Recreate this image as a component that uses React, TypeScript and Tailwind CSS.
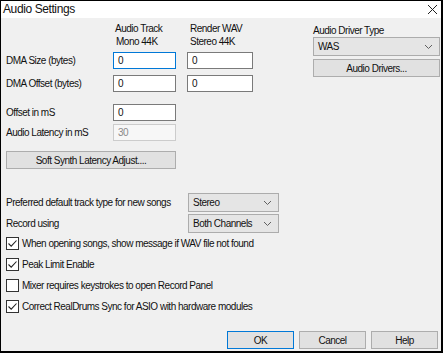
import React from "react";

const font = { fontFamily: "'Liberation Sans', Arial, sans-serif" };

function Chevron() {
  return (
    <svg width="9" height="6" viewBox="0 0 9 6" className="shrink-0">
      <path d="M1 1 L4.5 4.5 L8 1" fill="none" stroke="#606060" strokeWidth="1" />
    </svg>
  );
}

function Combo({ value, w }: { value: string; w: string }) {
  return (
    <div className={`${w} h-[19px] bg-[#e5e5e5] border border-[#acacac] flex items-center justify-between pl-[4px] pr-[6px]`}>
      <span>{value}</span>
      <Chevron />
    </div>
  );
}

function Btn({ label, cls }: { label: string; cls: string }) {
  return (
    <div className={`h-[18px] bg-[#e1e1e1] border border-[#adadad] flex items-center justify-center ${cls}`}>{label}</div>
  );
}

function Input({ value, cls = "", focus = false, disabled = false }: { value: string; cls?: string; focus?: boolean; disabled?: boolean }) {
  return (
    <div
      className={`h-[17px] flex items-center pl-[4px] ${
        disabled ? "bg-[#f7f7f7] border border-[#cccccc] text-[#8a8a8a]" : focus ? "bg-white border border-[#0078d7]" : "bg-white border border-[#7a7a7a]"
      } ${cls}`}
    >
      {value}
    </div>
  );
}

function Check({ checked, label }: { checked: boolean; label: string }) {
  return (
    <div className="h-[21px] flex items-center">
      <div className="w-[13px] h-[13px] border border-[#333333] bg-white flex items-center justify-center ml-[5px] mr-[3px]">
        {checked && (
          <svg width="11" height="11" viewBox="0 0 11 11">
            <path d="M1.5 5.5 L4.2 8.2 L9.5 2.5" fill="none" stroke="#222" strokeWidth="1.1" />
          </svg>
        )}
      </div>
      <span>{label}</span>
    </div>
  );
}

export default function App() {
  return (
    <div style={font} className="w-[443px] h-[353px] text-[10px] leading-[13px] tracking-[-0.5px] text-[#111]">
      <div className="w-[443px] h-[353px] border border-black border-r-2 border-b-2 bg-[#f0f0f0] flex flex-col">
        <div className="h-[17px] bg-white flex items-center justify-between pl-[2px] pr-[3px] shrink-0">
          <span className="text-[12px] tracking-[-0.4px]">Audio Settings</span>
          <svg width="11" height="11" viewBox="0 0 11 11">
            <path d="M1 1 L10 10 M10 1 L1 10" stroke="#222" strokeWidth="1" />
          </svg>
        </div>
        <div className="flex flex-col pl-[5px]">
          <div className="flex">
            <div className="w-[307px] flex flex-col">
              <div className="flex mt-[4px] h-[26px]">
                <div className="w-[108px]" />
                <div className="w-[76px] pl-[1px] flex flex-col">
                  <span>Audio Track</span>
                  <span className="pl-[1px]">Mono 44K</span>
                </div>
                <div className="flex flex-col">
                  <span>Render WAV</span>
                  <span>Stereo 44K</span>
                </div>
              </div>
              <div className="flex items-center mt-[4px]">
                <span className="w-[107px]">DMA Size (bytes)</span>
                <Input value="0" focus cls="w-[63px]" />
                <div className="w-[11px]" />
                <Input value="0" cls="w-[66px]" />
              </div>
              <div className="flex items-center mt-[6px]">
                <span className="w-[107px]">DMA Offset (bytes)</span>
                <Input value="0" cls="w-[63px]" />
                <div className="w-[11px]" />
                <Input value="0" cls="w-[66px]" />
              </div>
              <div className="flex items-center mt-[12px]">
                <span className="w-[107px]">Offset in mS</span>
                <Input value="0" cls="w-[63px]" />
              </div>
              <div className="flex items-center mt-[3px]">
                <span className="w-[107px]">Audio Latency in mS</span>
                <Input value="30" disabled cls="w-[63px]" />
              </div>
              <Btn label="Soft Synth Latency Adjust...." cls="w-[170px] mt-[10px]" />
            </div>
            <div className="flex flex-col mt-[6px] w-[127px]">
              <span>Audio Driver Type</span>
              <Combo value="WAS" w="w-[127px]" />
              <Btn label="Audio Drivers..." cls="w-[127px] mt-[3px]" />
            </div>
          </div>
          <div className="flex items-center mt-[24px]">
            <span className="w-[182px]">Preferred default track type for new songs</span>
            <Combo value="Stereo" w="w-[91px]" />
          </div>
          <div className="flex items-center mt-[2px]">
            <span className="w-[182px]">Record using</span>
            <Combo value="Both Channels" w="w-[91px]" />
          </div>
          <div className="-ml-[5px] flex flex-col">
            <Check checked label="When opening songs, show message if WAV file not found" />
            <Check checked label="Peak Limit Enable" />
            <Check checked={false} label="Mixer requires keystrokes to open Record Panel" />
            <Check checked label="Correct RealDrums Sync for ASIO with hardware modules" />
          </div>
          <div className="flex justify-end gap-[5px] mt-[14px] pr-[3px]">
            <div className="w-[67px] h-[18px] bg-[#e1e1e1] border border-[#0078d7] flex items-center justify-center">OK</div>
            <Btn label="Cancel" cls="w-[67px]" />
            <Btn label="Help" cls="w-[67px]" />
          </div>
        </div>
      </div>
    </div>
  );
}
